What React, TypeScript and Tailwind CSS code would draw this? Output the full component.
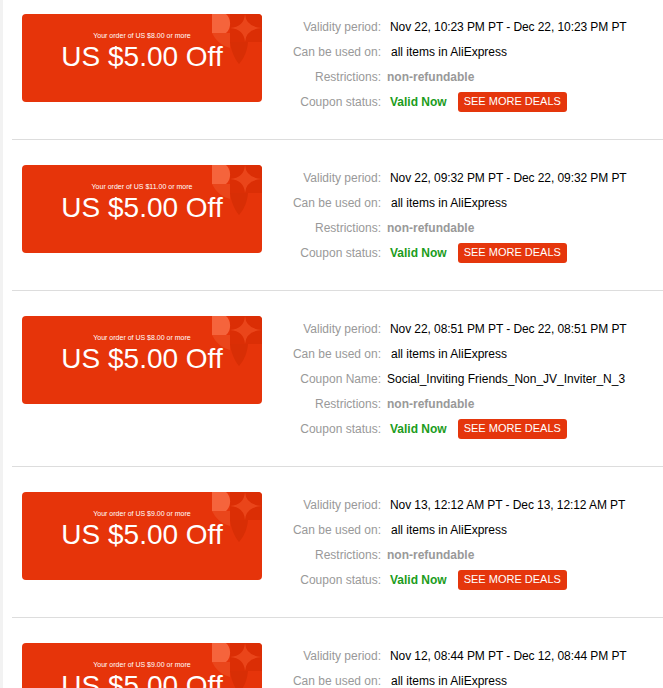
const coupons = [
  {
    min: "8.00",
    period: "Nov 22, 10:23 PM PT - Dec 22, 10:23 PM PT",
  },
  {
    min: "11.00",
    period: "Nov 22, 09:32 PM PT - Dec 22, 09:32 PM PT",
  },
  {
    min: "8.00",
    period: "Nov 22, 08:51 PM PT - Dec 22, 08:51 PM PT",
    name: "Social_Inviting Friends_Non_JV_Inviter_N_3",
  },
  {
    min: "9.00",
    period: "Nov 13, 12:12 AM PT - Dec 13, 12:12 AM PT",
  },
  {
    min: "9.00",
    period: "Nov 12, 08:44 PM PT - Dec 12, 08:44 PM PT",
  },
];

function Deco() {
  return (
    <svg
      className="absolute top-0 right-0"
      width="50"
      height="52"
      viewBox="0 0 50 52"
    >
      {/* block behind the star */}
      <path d="M18 0 H50 V28 H18 Z" fill="#db2e05" />
      {/* star */}
      <path
        d="M33 0 Q34 13 50 14 Q34 15 33 28 Q32 15 18 14 Q32 13 33 0 Z"
        fill="#ea451a"
      />
      {/* light leaf */}
      <path d="M0 0 H14 C19 4 20 14 14 19 H0 Z" fill="#f5643c" />
      {/* mid band under leaf */}
      <path d="M0 19 H18 V34 C10 32 4 27 0 19 Z" fill="#ea461b" />
      {/* dark lens below */}
      <path d="M18 28 H36 C35 38 32 44 27 50 C22 44 19 36 18 28 Z" fill="#d82e05" />
    </svg>
  );
}

function CouponCard({ min }: { min: string }) {
  return (
    <div className="relative w-[240px] h-[88px] shrink-0 rounded-[4px] bg-[#e6340a] overflow-hidden flex flex-col items-center pt-[18px] text-white">
      <Deco />
      <p className="relative text-[7px] leading-none">Your order of US ${min} or more</p>
      <p className="relative mt-[4px] text-[28px] leading-none">US $5.00 Off</p>
    </div>
  );
}

function Row({ label, children }: { label: string; children: React.ReactNode }) {
  return (
    <div className="flex items-center h-[25px]">
      <span className="w-[113px] text-right text-[#999]">{label}</span>
      {children}
    </div>
  );
}

export default function App() {
  return (
    <div className="h-screen w-full bg-white flex font-['Liberation_Sans',Arial,sans-serif] text-[12px] overflow-hidden">
      <div className="w-[3px] shrink-0 bg-[#f2f2f2]" />
      <div className="flex-1 pl-[9px] overflow-hidden">
        <div className="-mt-[11px]">
          {coupons.map((c, i) => (
            <div key={i} className="flex pt-[25px] pb-[25px] pl-[10px] border-b border-[#dddddd]">
              <CouponCard min={c.min} />
              <div className="ml-[6px]">
                <Row label="Validity period:">
                  <span className="pl-[9px] text-black whitespace-nowrap tracking-[-0.08px]">{c.period}</span>
                </Row>
                <Row label="Can be used on:">
                  <span className="pl-[10px] text-black">all items in AliExpress</span>
                </Row>
                {c.name && (
                  <Row label="Coupon Name:">
                    <span className="pl-[6px] text-black whitespace-nowrap">{c.name}</span>
                  </Row>
                )}
                <Row label="Restrictions:">
                  <span className="pl-[6px] font-bold text-[#999]">non-refundable</span>
                </Row>
                <Row label="Coupon status:">
                  <span className="pl-[9px] font-bold text-[#1c9c1c]">Valid Now</span>
                  <button className="ml-[11px] h-[20px] px-[6px] rounded-[3px] bg-[#e5360c] text-white text-[11px] leading-none">
                    SEE MORE DEALS
                  </button>
                </Row>
              </div>
            </div>
          ))}
        </div>
      </div>
    </div>
  );
}
